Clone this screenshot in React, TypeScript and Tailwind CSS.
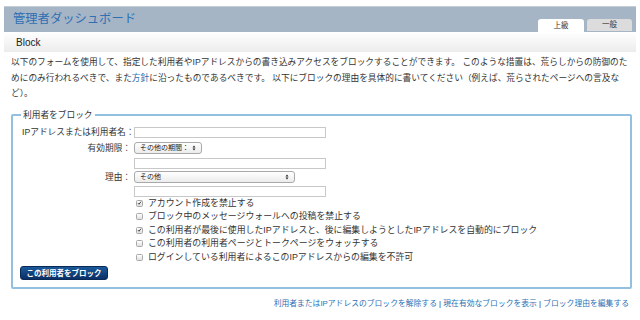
import React from "react";

const FONT = { fontFamily: '"Liberation Sans", "Noto Sans CJK JP", sans-serif' };

const CHECKS: { label: string; checked: boolean }[] = [
  { label: "アカウント作成を禁止する", checked: true },
  { label: "ブロック中のメッセージウォールへの投稿を禁止する", checked: false },
  { label: "この利用者が最後に使用したIPアドレスと、後に編集しようとしたIPアドレスを自動的にブロック", checked: true },
  { label: "この利用者の利用者ページとトークページをウォッチする", checked: false },
  { label: "ログインしている利用者によるこのIPアドレスからの編集を不許可", checked: false },
];

function Box({ checked }: { checked: boolean }) {
  return (
    <span className="ml-[2px] inline-flex h-[7px] w-[7px] items-center justify-center rounded-[1.5px] border border-[#a8a8a8] bg-gradient-to-b from-white to-[#e0e0e0]">
      {checked && (
        <svg viewBox="0 0 8 8" className="h-[6px] w-[6px]">
          <path d="M1.5 4.2 L3.2 6 L6.6 1.6" fill="none" stroke="#333" strokeWidth="1.5" />
        </svg>
      )}
    </span>
  );
}

function Select({ label, width }: { label: string; width: string }) {
  return (
    <div className={`flex h-[12px] items-center justify-between rounded-[3px] border border-[#a9a9a9] bg-gradient-to-b from-white to-[#ececec] pl-[5px] pr-[5px] text-[7px] text-[#222] ${width}`}>
      <span>{label}</span>
      <svg viewBox="0 0 4 7" className="h-[6px] w-[4px]">
        <path d="M0.3 2.8 L2 0.6 L3.7 2.8 Z M0.3 4.2 L2 6.4 L3.7 4.2 Z" fill="#222" />
      </svg>
    </div>
  );
}

function Input() {
  return <div className="h-[11px] w-[192px] border border-[#c8c8c8] bg-white" />;
}

export default function App() {
  return (
    <div className="h-[320px] w-[640px] bg-white px-[4px] pt-[6px] text-[#333]" style={FONT}>
      {/* header */}
      <div className="flex h-[26px] items-end justify-between border-t border-[#c4ccd4] bg-[#a5b5c5]">
        <div className="self-center pl-[9px] text-[12.3px] text-[#2e6fb4]">管理者ダッシュボード</div>
        <div className="flex gap-[3px] pr-[4px]">
          <div className="flex h-[13px] w-[46px] items-center justify-center rounded-t-[3px] bg-white text-[7.5px] text-[#333]">上級</div>
          <div className="flex h-[12px] w-[45px] items-center justify-center rounded-t-[3px] bg-[#dcdcdc] text-[7.5px] text-[#333]">一般</div>
        </div>
      </div>
      {/* block bar */}
      <div className="flex h-[20px] items-center bg-gradient-to-b from-white to-[#ececec] pl-[12px] text-[10px] text-[#222]">Block</div>

      <div className="px-[7px]">
        <p className="mt-[3px] text-[8.7px] leading-[15.5px] text-[#333]">
          以下のフォームを使用して、指定した利用者やIPアドレスからの書き込みアクセスをブロックすることができます。 このような措置は、荒らしからの防御のためにのみ行われるべきで、また<span className="text-[#2e6fb4]">方針</span>に沿ったものであるべきです。 以下にブロックの理由を具体的に書いてください（例えば、荒らされたページへの言及など）。
        </p>

        <fieldset className="mt-[7px] w-[621px] rounded-[2px] border-2 border-[#93c0e0] px-[9px] pb-[7px] pt-0 text-[8.7px]">
          <legend className="-ml-[1px] px-[2px] text-[8.7px] text-[#333]">利用者をブロック</legend>
          <div className="mt-[4px] grid grid-cols-[109px_1fr] items-center gap-x-[3px]">
            <div className="whitespace-nowrap text-right">IPアドレスまたは利用者名：</div>
            <Input />
            <div className="mt-[3px] text-right">有効期限：</div>
            <div className="mt-[3px]"><Select label="その他の期間：" width="w-[68px]" /></div>
            <div />
            <div className="mt-[3px]"><Input /></div>
            <div className="mt-[2px] text-right">理由：</div>
            <div className="mt-[2px]"><Select label="その他" width="w-[161px]" /></div>
            <div />
            <div className="mt-[2px]"><Input /></div>
            <div />
            <div className="flex flex-col">
              {CHECKS.map((c) => (
                <div key={c.label} className="flex h-[13.5px] items-center gap-[5px] text-[8.9px]">
                  <Box checked={c.checked} />
                  <span>{c.label}</span>
                </div>
              ))}
            </div>
          </div>
          <button className="mt-[2px] block h-[14px] w-[88px] -ml-[2px] rounded-[3px] border border-[#0a2a55] bg-gradient-to-b from-[#1a5a9a] to-[#0b2f66] text-[7.5px] font-bold text-white">
            この利用者をブロック
          </button>
        </fieldset>

        <div className="mt-[9px] text-right text-[7.8px] text-[#2e6fb4]">
          利用者またはIPアドレスのブロックを解除する<span className="text-[#333]"> | </span>現在有効なブロックを表示<span className="text-[#333]"> | </span>ブロック理由を編集する
        </div>
      </div>
    </div>
  );
}
